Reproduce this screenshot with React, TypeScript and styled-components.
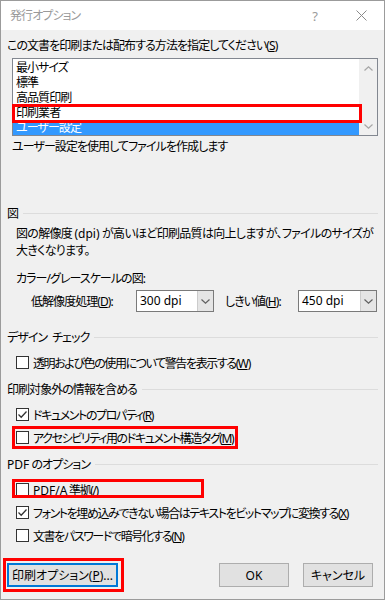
import React from 'react';
import styled, { createGlobalStyle, css } from 'styled-components';

const Global = createGlobalStyle`
  html, body { margin: 0; padding: 0; background: #f0f0f0; }
  body {
    font-family: "Noto Sans", "Noto Sans CJK JP", sans-serif;
    font-size: 12px;
    color: #000;
  }
  * { box-sizing: border-box; }
`;

const Window = styled.div`
  width: 385px;
  height: 600px;
  border: 1px solid #9b9b9b;
  background: #f0f0f0;
  display: flex;
  flex-direction: column;
  overflow: hidden;
  font-feature-settings: "palt";
  letter-spacing: -0.95px;
`;

const Latin = styled.span`
  letter-spacing: 0;
`;

const TitleBar = styled.div`
  height: 29px;
  flex: none;
  background: #fff;
  display: flex;
  align-items: center;
  padding-left: 9px;
  color: #9a9a9a;
`;

const TitleText = styled.span`
  flex: 1;
  line-height: 29px;
`;

const CaptionButton = styled.div`
  width: 46px;
  height: 29px;
  display: flex;
  align-items: center;
  justify-content: center;
  color: #9a9a9a;
  font-size: 13px;
  letter-spacing: 0;
`;

const Content = styled.div`
  flex: 1;
  display: flex;
  flex-direction: column;
  padding: 8px 6px 0 6px;
`;

const Text = styled.div<{ $top?: number; $indent?: number; $lh?: number; $ls?: number }>`
  margin-top: ${(p) => p.$top ?? 0}px;
  margin-left: ${(p) => p.$indent ?? 0}px;
  line-height: ${(p) => p.$lh ?? 15}px;
  white-space: nowrap;
  ${(p) =>
    p.$ls !== undefined &&
    css`
      letter-spacing: ${p.$ls}px;
    `}
`;

const ListBox = styled.div`
  margin: 5px 0 0 5px;
  height: 78px;
  border: 1px solid #828790;
  background: #fff;
  display: flex;
`;

const ListItems = styled.div`
  flex: 1;
  padding-top: 1px;
  display: flex;
  flex-direction: column;
`;

const ListItem = styled.div<{ $selected?: boolean }>`
  position: relative;
  height: 15px;
  line-height: 15px;
  padding-left: 3px;
  white-space: nowrap;
  ${(p) =>
    p.$selected &&
    css`
      background: #3399ff;
      color: #fff;
    `}
`;

const ScrollBar = styled.div`
  width: 18px;
  background: #f0f0f0;
  display: flex;
  flex-direction: column;
  justify-content: space-between;
  align-items: center;
  padding: 7px 0 6px;
`;

const Mark = styled.span<{ $top: number; $left: number; $w: number; $h: number }>`
  position: absolute;
  top: ${(p) => p.$top}px;
  left: ${(p) => p.$left}px;
  width: ${(p) => p.$w}px;
  height: ${(p) => p.$h}px;
  border: 3px solid #ff0000;
  pointer-events: none;
  z-index: 2;
`;

const Section = styled.div<{ $top: number }>`
  display: flex;
  align-items: center;
  gap: 5px;
  margin-top: ${(p) => p.$top}px;
  line-height: 15px;
  white-space: nowrap;
  &::after {
    content: "";
    flex: 1;
    height: 1px;
    background: #dcdcdc;
  }
`;

const WordGap = styled.span`
  display: inline-block;
  width: 5px;
`;

const ComboRow = styled.div`
  display: flex;
  align-items: center;
  margin: 4px 0 0 24px;
  height: 22px;
`;

const ComboLabel = styled.span<{ $w: number; $gap?: number }>`
  width: ${(p) => p.$w}px;
  margin-left: ${(p) => p.$gap ?? 0}px;
  white-space: nowrap;
`;

const Combo = styled.div<{ $w: number }>`
  width: ${(p) => p.$w}px;
  height: 22px;
  border: 1px solid #7a7a7a;
  background: #fff;
  display: flex;
  letter-spacing: 0;
`;

const ComboValue = styled.span`
  flex: 1;
  padding-left: 3px;
  line-height: 20px;
`;

const ComboArrow = styled.span`
  width: 16px;
  background: #e5e5e5;
  border-left: 1px solid #cccccc;
  display: flex;
  align-items: center;
  justify-content: center;
`;

const CheckGroup = styled.div`
  margin-top: 6px;
  display: flex;
  flex-direction: column;
`;

const CheckRow = styled.label`
  position: relative;
  display: flex;
  align-items: center;
  gap: 4px;
  height: 23px;
  margin-left: 5px;
  padding-left: 4px;
  white-space: nowrap;
  letter-spacing: -1.4px;
`;

const Box = styled.span`
  width: 13px;
  height: 13px;
  flex: none;
  border: 1px solid #333;
  background: #fff;
  display: flex;
  align-items: center;
  justify-content: center;
`;

const ButtonRow = styled.div`
  display: flex;
  align-items: center;
  margin-top: 16px;
  padding-right: 5px;
  gap: 14px;
`;

const Spacer = styled.div`
  flex: 1;
`;

const Button = styled.button<{ $w: number; $focused?: boolean }>`
  position: relative;
  width: ${(p) => p.$w}px;
  height: 24px;
  padding: 0;
  background: #e1e1e1;
  border: 1px solid #adadad;
  font: inherit;
  font-size: 12px;
  color: #000;
  white-space: nowrap;
  ${(p) =>
    p.$focused &&
    css`
      border: 2px solid #0078d7;
    `}
`;

const Chevron = ({ up, color }: { up?: boolean; color: string }) => (
  <svg width="9" height="5" viewBox="0 0 9 5">
    <path
      d={up ? 'M0.5 4.5 L4.5 0.8 L8.5 4.5' : 'M0.5 0.5 L4.5 4.2 L8.5 0.5'}
      fill="none"
      stroke={color}
      strokeWidth="1.2"
    />
  </svg>
);

const Check = () => (
  <svg width="11" height="11" viewBox="0 0 11 11">
    <path d="M1.5 5.5 L4.2 8.2 L9.5 2.5" fill="none" stroke="#333" strokeWidth="1.3" />
  </svg>
);

const CheckItem = ({
  checked,
  children,
  mark,
}: {
  checked?: boolean;
  children: React.ReactNode;
  mark?: { top: number; left: number; w: number; h: number };
}) => (
  <CheckRow>
    <Box>{checked && <Check />}</Box>
    <span>{children}</span>
    {mark && <Mark $top={mark.top} $left={mark.left} $w={mark.w} $h={mark.h} />}
  </CheckRow>
);

export default function App() {
  return (
    <>
      <Global />
      <Window>
        <TitleBar>
          <TitleText>発行オプション</TitleText>
          <CaptionButton>?</CaptionButton>
          <CaptionButton>
            <svg width="11" height="11" viewBox="0 0 11 11">
              <path d="M0.5 0.5 L10.5 10.5 M10.5 0.5 L0.5 10.5" stroke="#8a8a8a" strokeWidth="1" />
            </svg>
          </CaptionButton>
        </TitleBar>
        <Content>
          <Text>
            この文書を印刷または配布する方法を指定してください(<u>S</u>)
          </Text>
          <ListBox>
            <ListItems>
              <ListItem>最小サイズ</ListItem>
              <ListItem>標準</ListItem>
              <ListItem>高品質印刷</ListItem>
              <ListItem>
                印刷業者
                <Mark $top={-1} $left={-1} $w={350} $h={19} />
              </ListItem>
              <ListItem $selected>ユーザー設定</ListItem>
            </ListItems>
            <ScrollBar>
              <Chevron up color="#a6a6a6" />
              <Chevron color="#a6a6a6" />
            </ScrollBar>
          </ListBox>
          <Text $top={3} $indent={5}>
            ユーザー設定を使用してファイルを作成します
          </Text>

          <Section $top={52}>図</Section>
          <Text $top={4} $indent={9} $lh={17} $ls={-0.7}>
            図の解像度 <Latin>(dpi)</Latin> が高いほど印刷品質は向上しますが、ファイルのサイズが
            <br />
            大きくなります。
          </Text>
          <Text $top={12} $indent={9}>
            カラー/グレースケールの図:
          </Text>
          <ComboRow>
            <ComboLabel $w={105}>
              低解像度処理(<u>D</u>):
            </ComboLabel>
            <Combo $w={78}>
              <ComboValue>300 dpi</ComboValue>
              <ComboArrow>
                <Chevron color="#606060" />
              </ComboArrow>
            </Combo>
            <ComboLabel $w={73} $gap={11}>
              しきい値(<u>H</u>):
            </ComboLabel>
            <Combo $w={79}>
              <ComboValue>450 dpi</ComboValue>
              <ComboArrow>
                <Chevron color="#606060" />
              </ComboArrow>
            </Combo>
          </ComboRow>

          <Section $top={18}>
            <span>
              デザイン
              <WordGap />
              チェック
            </span>
          </Section>
          <CheckGroup>
            <CheckItem>
              透明および色の使用について警告を表示する(<u>W</u>)
            </CheckItem>
          </CheckGroup>

          <Section $top={8}>印刷対象外の情報を含める</Section>
          <CheckGroup>
            <CheckItem checked>
              ドキュメントのプロパティ(<u>R</u>)
            </CheckItem>
            <CheckItem mark={{ top: 0, left: 0, w: 226, h: 23 }}>
              アクセシビリティ用のドキュメント構造タグ(<u>M</u>)
            </CheckItem>
          </CheckGroup>

          <Section $top={8}>
            <span>
              <Latin>PDF</Latin> のオプション
            </span>
          </Section>
          <CheckGroup>
            <CheckItem mark={{ top: 1, left: 0, w: 192, h: 19 }}>
              <Latin>PDF/A</Latin> 準拠(<u>/</u>)
            </CheckItem>
            <CheckItem checked>
              フォントを埋め込みできない場合はテキストをビットマップに変換する(<u>X</u>)
            </CheckItem>
            <CheckItem>
              文書をパスワードで暗号化する(<u>N</u>)
            </CheckItem>
          </CheckGroup>

          <ButtonRow>
            <Button $w={111} $focused>
              印刷オプション(<u>P</u>)...
              <Mark $top={-7} $left={-6} $w={121} $h={34} />
            </Button>
            <Spacer />
            <Button $w={70}>
              <Latin>OK</Latin>
            </Button>
            <Button $w={70}>キャンセル</Button>
          </ButtonRow>
        </Content>
      </Window>
    </>
  );
}
